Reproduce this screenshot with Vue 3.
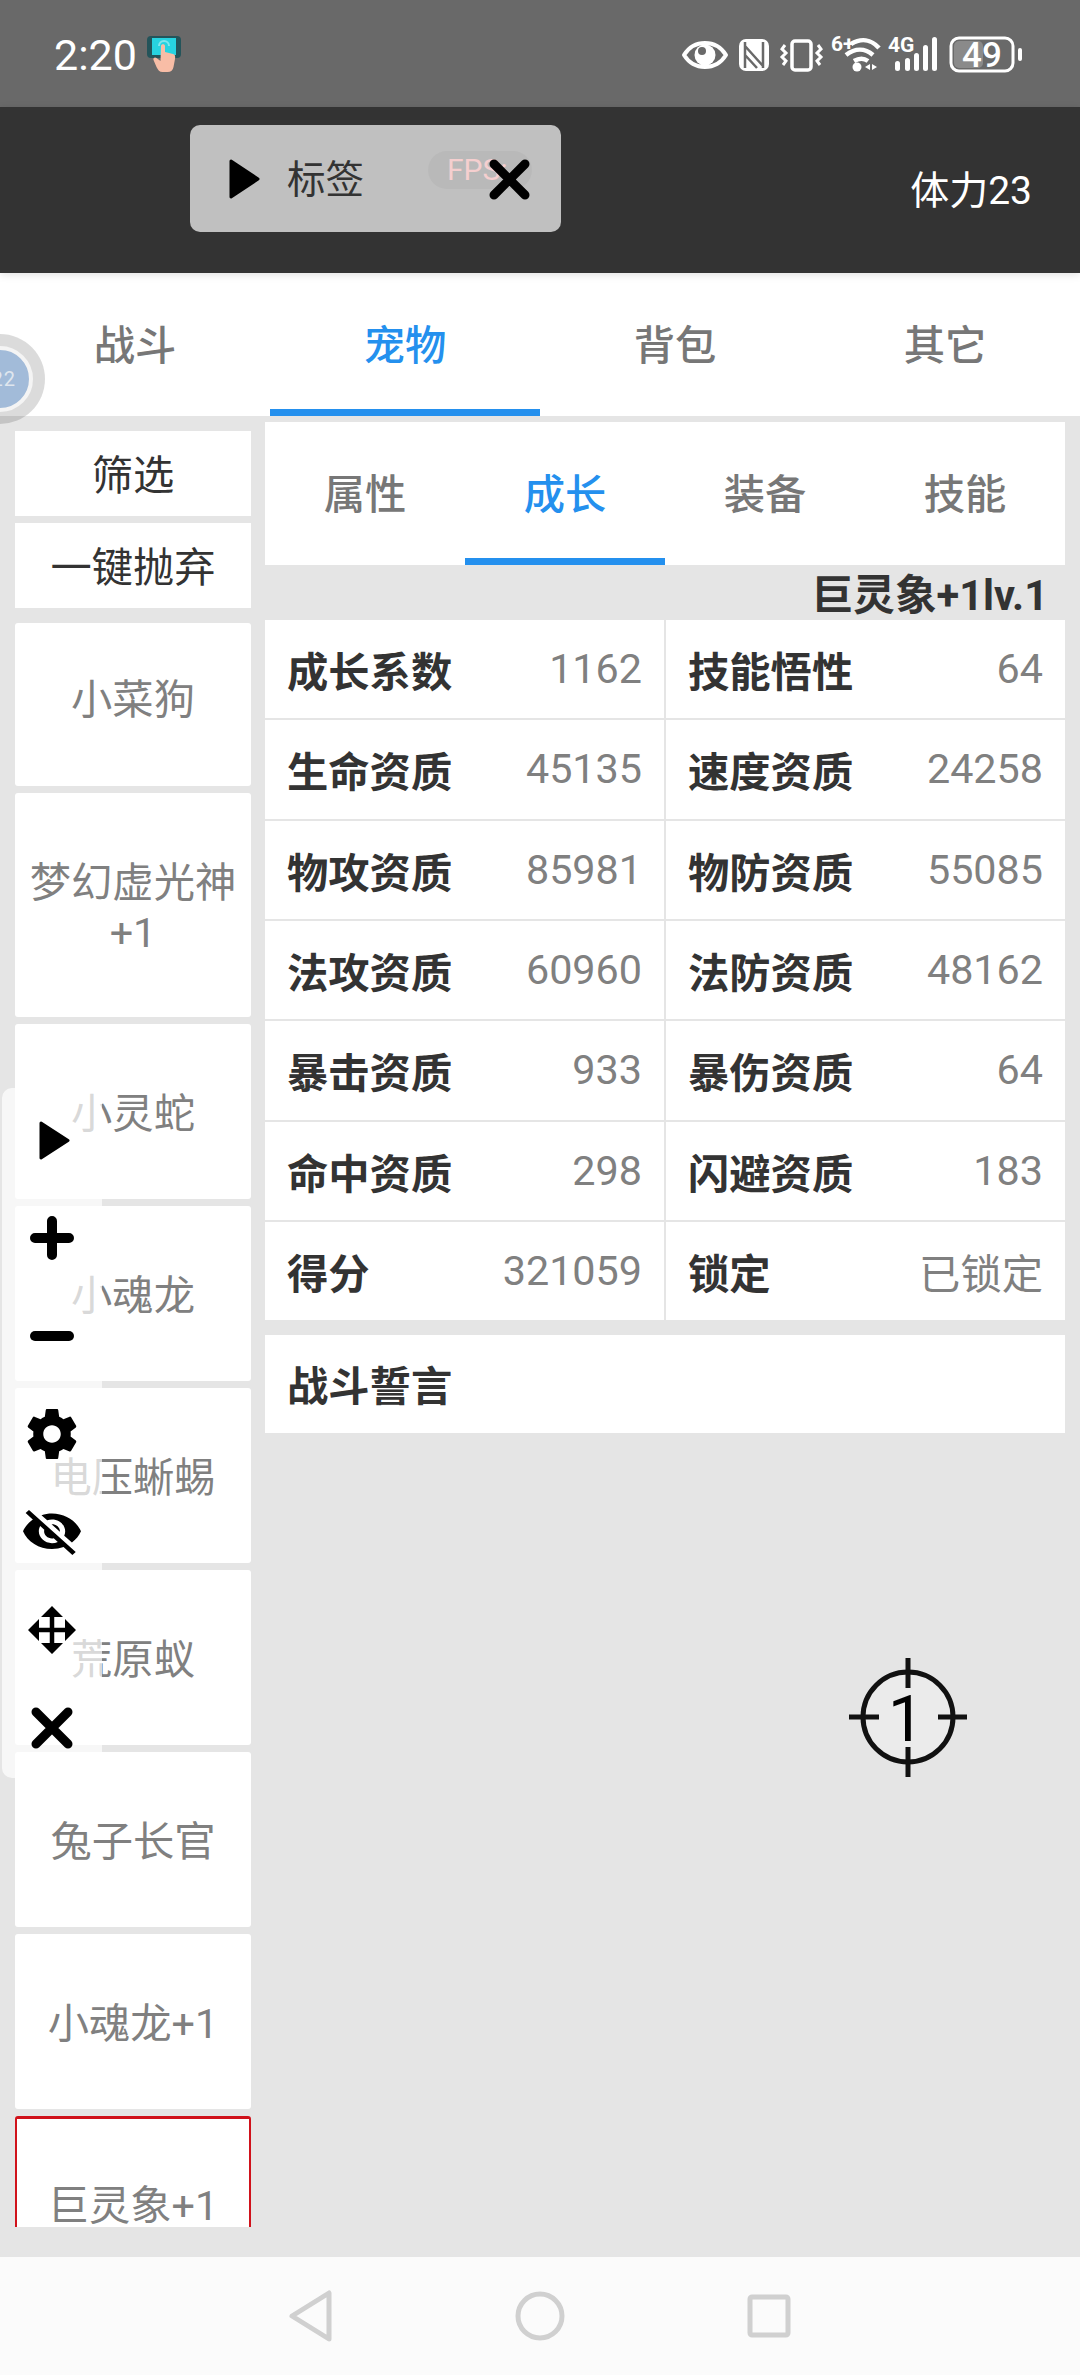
<script setup>
const mainTabs = [
  { name: '战斗' },
  { name: '宠物', active: true },
  { name: '背包' },
  { name: '其它' }
]
const subTabs = [
  { name: '属性' },
  { name: '成长', active: true },
  { name: '装备' },
  { name: '技能' }
]
const pets = [
  { lines: ['小菜狗'], kind: 'short' },
  { lines: ['梦幻虚光神', '+1'], kind: 'tall' },
  { lines: ['小灵蛇'] },
  { lines: ['小魂龙'] },
  { lines: ['电压蜥蜴'] },
  { lines: ['荒原蚁'] },
  { lines: ['兔子长官'] },
  { lines: ['小魂龙+1'] },
  { lines: ['巨灵象+1'], kind: 'selected' }
]
const stats = [
  ['成长系数', '1162'], ['技能悟性', '64'],
  ['生命资质', '45135'], ['速度资质', '24258'],
  ['物攻资质', '85981'], ['物防资质', '55085'],
  ['法攻资质', '60960'], ['法防资质', '48162'],
  ['暴击资质', '933'], ['暴伤资质', '64'],
  ['命中资质', '298'], ['闪避资质', '183'],
  ['得分', '321059'], ['锁定', '已锁定']
]
</script>

<template>
  <div class="page">
    <div class="status">
      <span class="time">2:20</span>
      <svg class="hand" width="34" height="36" viewBox="0 0 34 36">
        <rect x="0" y="0" width="34" height="22" rx="4" fill="#24545a" />
        <rect x="5" y="2" width="24" height="17" fill="#27d3e0" />
        <path d="M12 10a5 5 0 0 1 10 0" fill="none" stroke="#7fe6ee" stroke-width="2" />
        <path d="M14 10c0-2.500 4-2.500 4 0v6l8 2c2 .5 2.500 2 2 5l-1.500 8c-.5 3-2.500 5-6 5h-5c-3 0-4.500-2-6-5l-3-7c-.8-2 1.500-3.500 3-2l4 3z" fill="#f8bda6" />
      </svg>
      <svg class="sys" width="344" height="45" viewBox="680 30 344 45">
        <path d="M684 54c5-8 11.500-12 21-12s16 4 21 12c-5 8-11.500 12-21 12s-16-4-21-12z" fill="none" stroke="#fff" stroke-width="4" stroke-linejoin="round" />
        <circle cx="705" cy="54" r="10.500" fill="#fff" />
        <circle cx="702" cy="50" r="4" fill="#696969" />
        <rect x="739" y="38" width="30" height="32" rx="7" fill="#fff" />
        <path d="M745 41v26M763 41v26M745 45l18 20M745 54l12 13" fill="none" stroke="#696969" stroke-width="2.500" />
        <rect x="792" y="40" width="19" height="29" rx="3" fill="none" stroke="#fff" stroke-width="3.500" />
        <path d="M785 44l-3 4 4 4-4 4 4 4-3 4M818 44l3 4-4 4 4 4-4 4 3 4" fill="none" stroke="#fff" stroke-width="3" />
        <text x="831" y="50" class="tiny">6+</text>
        <path d="M851 43c10-6 20-5 28 4M846 54c9-7 19-7 27 0M854 60c5-3 10-3 14 0" fill="none" stroke="#fff" stroke-width="4.500" />
        <circle cx="857" cy="66" r="4.500" fill="#fff" />
        <path d="M865 66l5-3v6zM872 63l5 3-5 3z" fill="#fff" />
        <text x="888" y="51" class="tiny">4G</text>
        <rect x="895" y="60" width="5" height="10" rx="2.500" fill="#fff" />
        <rect x="905" y="57" width="5" height="13" rx="2.500" fill="#fff" />
        <rect x="914" y="52" width="5" height="18" rx="2.500" fill="#fff" />
        <rect x="923" y="44" width="5" height="26" rx="2.500" fill="#fff" />
        <rect x="932" y="36" width="5" height="34" rx="2.500" fill="#fff" />
        <rect x="951" y="37" width="62" height="33" rx="8" fill="none" stroke="#fff" stroke-width="3" />
        <rect x="954" y="40" width="29" height="27" rx="5" fill="#8a8a8a" />
        <text x="982" y="66" class="batt">49</text>
        <rect x="1018" y="47" width="4" height="13" rx="2" fill="#fff" />
      </svg>
    </div>

    <header class="top">
      <span class="stamina">体力23</span>
      <div class="float-tag">
        <svg width="31" height="40" viewBox="0 0 31 40"><path d="M2 2l27 18L2 38z" fill="#000" stroke="#000" stroke-width="3" stroke-linejoin="round" /></svg>
        <span class="tag-label">标签</span>
        <span class="fps">FPS:</span>
        <svg class="tag-x" width="41" height="41" viewBox="0 0 41 41"><path d="M5 5l31 31M36 5L5 36" fill="none" stroke="#000" stroke-width="9" stroke-linecap="round" /></svg>
      </div>
    </header>

    <nav class="tabs main-tabs">
      <div v-for="t in mainTabs" :key="t.name" class="tab" :class="{ on: t.active }">{{ t.name }}</div>
    </nav>

    <main class="body">
      <aside class="left">
        <div class="actions">
          <div class="action">筛选</div>
          <div class="action">一键抛弃</div>
        </div>
        <div class="pets">
          <div v-for="p in pets" :key="p.lines[0]" class="pet" :class="p.kind">
            <span v-for="l in p.lines" :key="l">{{ l }}</span>
          </div>
        </div>
      </aside>

      <section class="right">
        <nav class="tabs sub-tabs">
          <div v-for="t in subTabs" :key="t.name" class="tab" :class="{ on: t.active }">{{ t.name }}</div>
        </nav>
        <div class="title">巨灵象+1lv.1</div>
        <div class="grid">
          <div v-for="s in stats" :key="s[0]" class="cell">
            <b>{{ s[0] }}</b>
            <span>{{ s[1] }}</span>
          </div>
        </div>
        <div class="oath">战斗誓言</div>
        <svg class="target" width="122" height="122" viewBox="0 0 122 122">
          <circle cx="61" cy="61" r="45" fill="#ebebeb" stroke="#111" stroke-width="5" />
          <path d="M61 2v30M61 91v30M2 61h30M91 61h29" fill="none" stroke="#111" stroke-width="5" />
          <text x="59" y="85" class="target-num">1</text>
        </svg>
      </section>
    </main>

    <footer class="nav">
      <div class="nav-slot">
        <svg width="48" height="54" viewBox="0 0 48 54"><path d="M42 4v46L5 27z" fill="none" stroke="#d0d0d0" stroke-width="5" stroke-linejoin="round" /></svg>
      </div>
      <div class="nav-slot">
        <svg width="52" height="52" viewBox="0 0 52 52"><circle cx="26" cy="26" r="22" fill="none" stroke="#d0d0d0" stroke-width="5" /></svg>
      </div>
      <div class="nav-slot">
        <svg width="46" height="46" viewBox="0 0 46 46"><rect x="4" y="4" width="38" height="38" rx="2" fill="none" stroke="#d0d0d0" stroke-width="5" /></svg>
      </div>
    </footer>

    <div class="ball">
      <span class="ball-core">22</span>
    </div>

    <div class="tools">
      <div class="tool tool-play">
        <svg width="31" height="39" viewBox="0 0 31 39"><path d="M2 2l27 17.500L2 37z" fill="#000" stroke="#000" stroke-width="3" stroke-linejoin="round" /></svg>
      </div>
      <div class="tool">
        <svg width="44" height="44" viewBox="0 0 44 44"><path d="M5 22h34M22 5v34" fill="none" stroke="#000" stroke-width="10" stroke-linecap="round" /></svg>
      </div>
      <div class="tool">
        <svg width="44" height="14" viewBox="0 0 44 14"><path d="M5 7h34" fill="none" stroke="#000" stroke-width="10" stroke-linecap="round" /></svg>
      </div>
      <div class="tool">
        <svg width="50" height="50" viewBox="2 2 20 20"><path fill="#000" d="M19.430 12.980c.04-.32.07-.64.07-.98s-.03-.66-.07-.98l2.110-1.650c.19-.15.24-.42.12-.64l-2-3.460c-.12-.22-.39-.3-.61-.22l-2.490 1c-.52-.4-1.080-.73-1.690-.98l-.38-2.650C14.460 2.180 14.250 2 14 2h-4c-.25 0-.46.18-.49.42l-.38 2.650c-.61.25-1.170.59-1.690.98l-2.490-1c-.23-.09-.49 0-.61.22l-2 3.460c-.13.22-.07.49.12.64l2.110 1.650c-.04.32-.07.65-.07.98s.03.66.07.98l-2.110 1.650c-.19.15-.24.42-.12.64l2 3.460c.12.22.39.3.61.22l2.490-1c.52.4 1.080.73 1.690.98l.38 2.650c.03.24.24.42.49.42h4c.25 0 .46-.18.49-.42l.38-2.650c.61-.25 1.170-.59 1.690-.98l2.490 1c.23.09.49 0 .61-.22l2-3.460c.12-.22.07-.49-.12-.64l-2.110-1.650zM12 15.500c-1.930 0-3.500-1.570-3.500-3.500s1.570-3.500 3.500-3.500 3.500 1.570 3.500 3.500-1.570 3.500-3.500 3.500z" /></svg>
      </div>
      <div class="tool">
        <svg width="58" height="45" viewBox="1 3 22 19" preserveAspectRatio="none"><path fill="#000" d="M12 7c2.760 0 5 2.240 5 5 0 .65-.13 1.260-.36 1.830l2.920 2.920c1.510-1.260 2.700-2.890 3.430-4.750-1.730-4.390-6-7.500-11-7.500-1.400 0-2.740.25-3.980.7l2.160 2.160C10.740 7.130 11.350 7 12 7zM2 4.270l2.280 2.280.46.46C3.080 8.300 1.780 10.020 1 12c1.730 4.390 6 7.500 11 7.500 1.550 0 3.030-.3 4.380-.84l.42.42L19.730 22 21 20.730 3.270 3 2 4.270zM7.530 9.800l1.550 1.550c-.05.21-.08.43-.08.65 0 1.660 1.340 3 3 3 .22 0 .44-.03.65-.08l1.550 1.550c-.67.33-1.410.53-2.200.53-2.760 0-5-2.240-5-5 0-.79.2-1.530.53-2.200zm4.310-.78l3.150 3.150.02-.16c0-1.660-1.340-3-3-3l-.17.01z" /></svg>
      </div>
      <div class="tool">
        <svg width="48" height="48" viewBox="0 0 48 48"><path d="M24 8v32M8 24h32" fill="none" stroke="#000" stroke-width="4.500" /><path d="M24 0l11 11H13zM24 48L13 37h22zM0 24l11-11v22zM48 24L37 35V13z" fill="#000" /></svg>
      </div>
      <div class="tool">
        <svg width="42" height="42" viewBox="0 0 42 42"><path d="M5 5l32 32M37 5L5 37" fill="none" stroke="#000" stroke-width="9" stroke-linecap="round" /></svg>
      </div>
    </div>
  </div>
</template>

<style>
html, body { margin: 0; padding: 0; background: #e5e5e5; }
</style>

<style scoped>
.page {
  position: relative;
  width: 1080px;
  height: 2375px;
  overflow: hidden;
  display: flex;
  flex-direction: column;
  background: #e5e5e5;
  font-family: Roboto, "Noto Sans CJK SC", sans-serif;
}
.status {
  height: 107px;
  flex: none;
  background: #696969;
  display: flex;
  align-items: center;
  padding-left: 54px;
  box-sizing: border-box;
  color: #fff;
}
.time { font-size: 43px; line-height: 50px; width: 93px; padding-top: 2px; }
.sys { margin-left: auto; margin-right: 56px; }
.tiny { font: 700 21px Roboto, sans-serif; fill: #fff; }
.batt { font: 500 35px Roboto, sans-serif; fill: #fff; text-anchor: middle; }
.top {
  position: relative;
  z-index: 1;
  height: 166px;
  flex: none;
  background: #333;
  display: flex;
  align-items: center;
  justify-content: flex-end;
  padding-right: 48px;
  box-sizing: border-box;
  box-shadow: 0 2px 8px rgba(0, 0, 0, .12);
}
.stamina { color: #fff; font-size: 39px; line-height: 48px; padding-top: 2px; }
.float-tag {
  position: absolute;
  left: 190px;
  top: 18px;
  width: 371px;
  height: 107px;
  box-sizing: border-box;
  background: #c0c0c0;
  border-radius: 10px;
  display: flex;
  align-items: center;
  padding-left: 39px;
}
.tag-label { font-size: 38.500px; line-height: 48px; color: #333; margin-left: 27px; margin-top: 2px; }
.fps {
  position: absolute;
  left: 238px;
  top: 26px;
  width: 104px;
  height: 38px;
  padding-left: 19px;
  box-sizing: border-box;
  border-radius: 19px;
  background: #b9b9b9;
  color: #f5cfcf;
  font-size: 30px;
  line-height: 38px;
  overflow: hidden;
}
.tag-x { position: absolute; left: 299px; top: 34px; }
.tabs { display: flex; background: #fff; flex: none; }
.main-tabs { height: 143px; }
.tab {
  flex: 1;
  display: flex;
  align-items: center;
  justify-content: center;
  padding-bottom: 6px;
  font-size: 41.300px;
  font-weight: 500;
  color: #777;
  box-sizing: border-box;
  position: relative;
}
.tab.on { color: #2490ee; }
.tab.on::after {
  content: "";
  position: absolute;
  left: 0;
  right: 0;
  bottom: 0;
  height: 7px;
  background: #2490ee;
}
.body { flex: 1; display: flex; min-height: 0; }
.left {
  width: 236px;
  margin: 15px 14px 30px 15px;
  overflow: hidden;
  flex: none;
}
.actions { display: flex; flex-direction: column; gap: 7px; margin-bottom: 15px; }
.action {
  height: 85px;
  box-sizing: border-box;
  padding-bottom: 3px;
  background: #fff;
  display: flex;
  align-items: center;
  justify-content: center;
  font-size: 41.300px;
  color: #333;
}
.pets { display: flex; flex-direction: column; gap: 7px; }
.pet {
  height: 175px;
  flex: none;
  box-sizing: border-box;
  padding-top: 5px;
  background: #fff;
  border-radius: 3px;
  display: flex;
  flex-direction: column;
  align-items: center;
  justify-content: center;
  font-size: 41.300px;
  line-height: 50px;
  color: #808080;
}
.pet.short { height: 163px; padding-top: 0; padding-bottom: 10px; }
.pet.tall { height: 224px; }
.pet.selected { border: 2px solid #d0121b; border-top-width: 3px; padding-top: 4px; line-height: 42px; }
.right { position: relative; width: 800px; padding-top: 6px; flex: none; }
.sub-tabs { height: 143px; }
.title {
  height: 55px;
  text-align: right;
  padding-right: 17px;
  font-size: 41.600px;
  line-height: 61px;
  font-weight: 700;
  color: #333;
}
.grid {
  display: grid;
  grid-template-columns: 399px 399px;
  grid-auto-rows: 98.33px;
  gap: 2px;
}
.cell {
  background: #fff;
  display: flex;
  align-items: center;
  justify-content: space-between;
  padding: 0 22px 0 22px;
  font-size: 41.300px;
  color: #808080;
}
.cell b { color: #333; font-weight: 700; }
.oath {
  margin-top: 15px;
  height: 98px;
  box-sizing: border-box;
  padding: 0 0 2px 22px;
  background: #fff;
  display: flex;
  align-items: center;
  font-size: 41.300px;
  font-weight: 700;
  color: #333;
}
.target { position: absolute; left: 582px; top: 1240px; }
.target-num { font: 400 64px Roboto, sans-serif; fill: #000; text-anchor: middle; }
.nav {
  height: 118px;
  flex: none;
  background: #fbfbfb;
  display: flex;
  justify-content: center;
  align-items: center;
}
.nav-slot { width: 229px; display: flex; justify-content: center; }
.ball {
  position: absolute;
  left: -45px;
  top: 334px;
  width: 90px;
  height: 90px;
  border-radius: 50%;
  background: rgba(0, 0, 0, .14);
  display: flex;
  align-items: center;
  justify-content: center;
}
.ball-core {
  width: 66px;
  height: 66px;
  box-sizing: border-box;
  border: 4px solid #f4f4f4;
  border-radius: 50%;
  background: #a2bbd9;
  color: #dfe6ee;
  font-size: 20px;
  line-height: 58px;
  text-align: right;
  padding-right: 13px;
  letter-spacing: 1px;
}
.tools {
  position: absolute;
  left: 2px;
  top: 1088px;
  width: 100px;
  height: 690px;
  padding-top: 3px;
  box-sizing: border-box;
  border-radius: 10px;
  background: rgba(255, 255, 255, .7);
  display: flex;
  flex-direction: column;
}
.tool { height: 98px; flex: none; display: flex; align-items: center; justify-content: center; }
.tool-play { padding-left: 4px; box-sizing: border-box; }
</style>
